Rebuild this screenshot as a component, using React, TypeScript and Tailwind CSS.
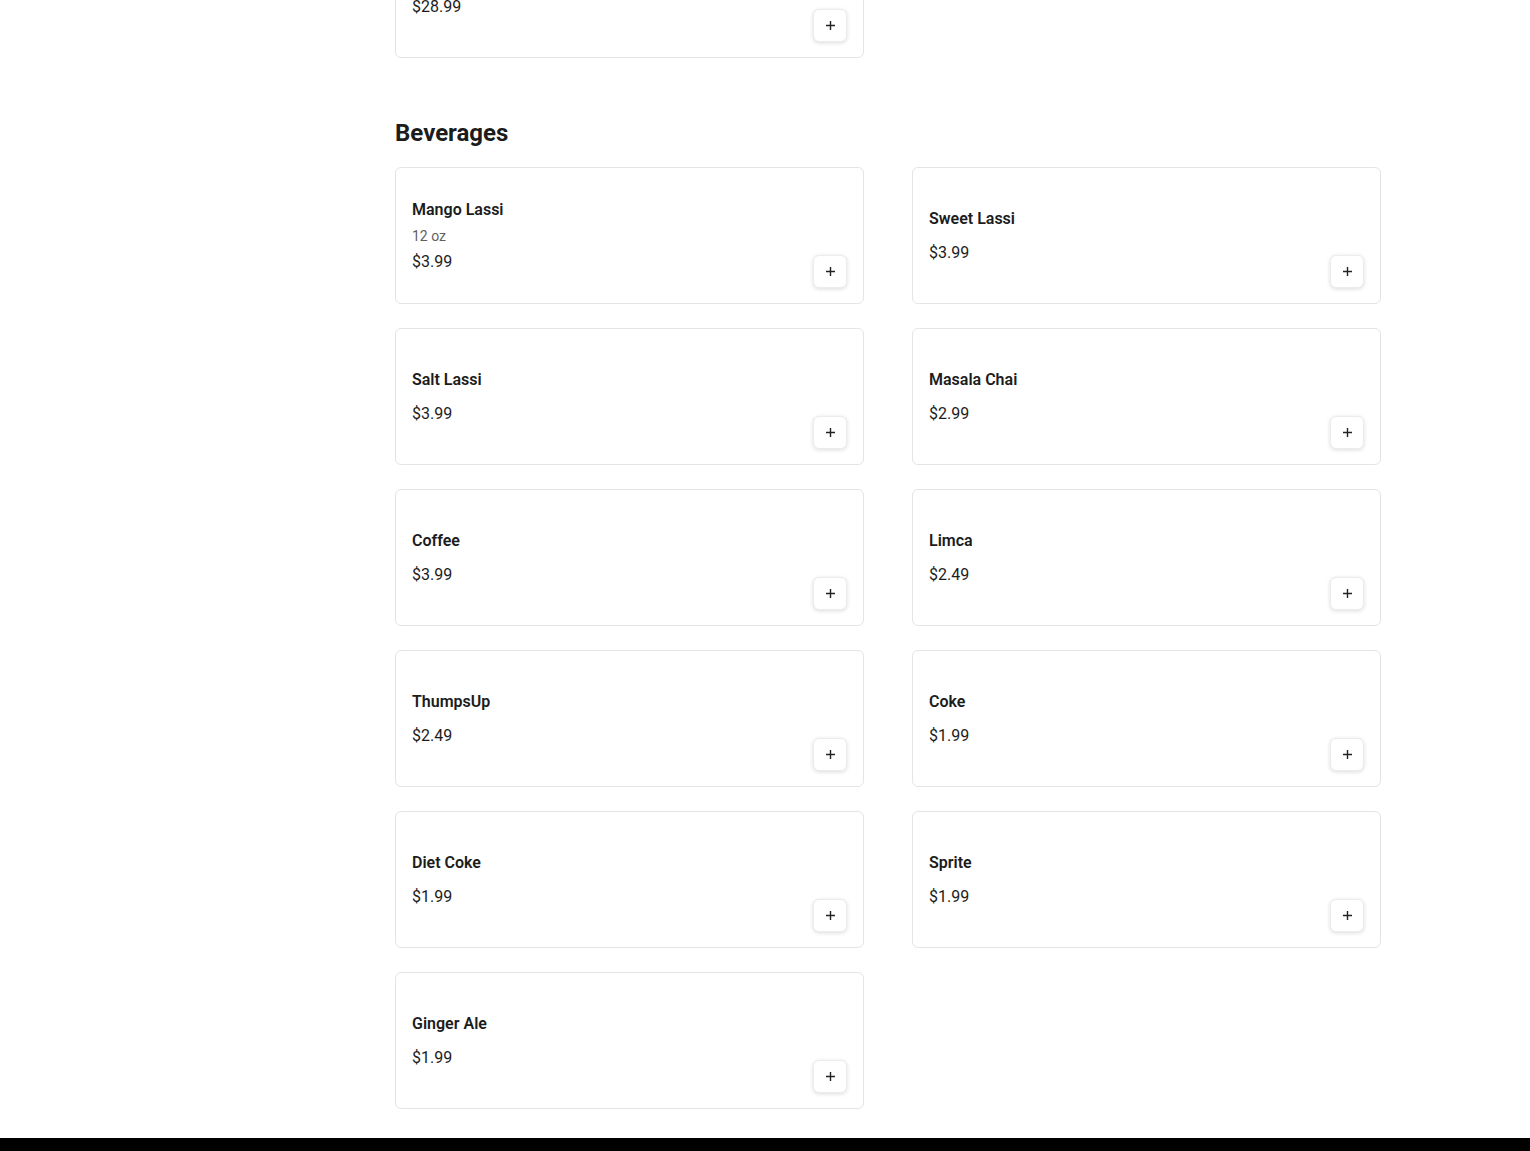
import React from "react";

type Item = { name: string; price: string; desc?: string };

const items: Item[] = [
  { name: "Mango Lassi", desc: "12 oz", price: "$3.99" },
  { name: "Sweet Lassi", price: "$3.99" },
  { name: "Salt Lassi", price: "$3.99" },
  { name: "Masala Chai", price: "$2.99" },
  { name: "Coffee", price: "$3.99" },
  { name: "Limca", price: "$2.49" },
  { name: "ThumpsUp", price: "$2.49" },
  { name: "Coke", price: "$1.99" },
  { name: "Diet Coke", price: "$1.99" },
  { name: "Sprite", price: "$1.99" },
  { name: "Ginger Ale", price: "$1.99" },
];

function PlusButton() {
  return (
    <button className="-mb-px self-end flex h-[33px] w-[34px] shrink-0 items-center justify-center rounded-md border border-[#ececec] bg-white shadow-[0_1px_4px_rgba(0,0,0,0.14)]">
      <svg width="11" height="11" viewBox="0 0 11 11" fill="none">
        <path d="M5.5 1v9M1 5.5h9" stroke="#222" strokeWidth="1.4" />
      </svg>
    </button>
  );
}

function Card({ item, className = "" }: { item: Item; className?: string }) {
  return (
    <div
      className={
        "flex h-[137px] items-stretch justify-between rounded-md border border-[#e4e4e4] bg-white p-4 " +
        className
      }
    >
      <div className="flex flex-col justify-center">
        <div className="text-[16px] leading-6 font-semibold text-[#1c1c1c]">{item.name}</div>
        {item.desc ? (
          <>
            <div className="mt-1 text-[14px] leading-5 text-[#5f5f5f]">{item.desc}</div>
            <div className="mt-1 text-[16px] leading-6 text-[#1c1c1c]">{item.price}</div>
          </>
        ) : (
          <div className="mt-[10px] text-[16px] leading-6 text-[#1c1c1c]">{item.price}</div>
        )}
      </div>
      <PlusButton />
    </div>
  );
}

export default function App() {
  return (
    <div className="min-h-[1151px] overflow-hidden bg-white font-['Roboto',sans-serif]">
      <div className="flex">
        <div className="w-[395px] shrink-0" />
        <div className="w-[986px]">
          <div className="grid grid-cols-2 gap-x-12">
            <Card item={{ name: "Thali", price: "$28.99" }} className="-mt-[79px]" />
          </div>
          <h2 className="mt-[59px] text-[24px] leading-8 font-bold text-[#1c1c1c]">Beverages</h2>
          <div className="mt-[18px] grid grid-cols-2 gap-x-12 gap-y-6">
            {items.map((it) => (
              <Card key={it.name} item={it} />
            ))}
          </div>
        </div>
      </div>
      <div className="mt-[29px] h-[60px] bg-black" />
    </div>
  );
}
